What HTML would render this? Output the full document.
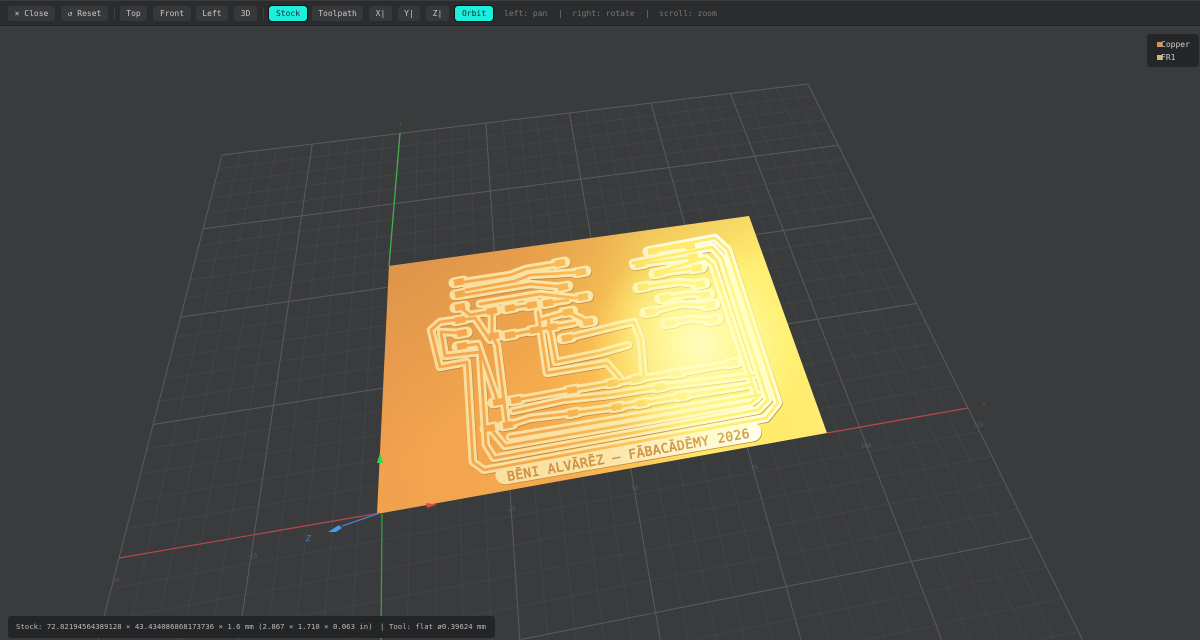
<!DOCTYPE html>
<html><head><meta charset="utf-8"><style>
html,body{margin:0;padding:0;background:#3a3b3d;width:1200px;height:640px;overflow:hidden}
body{position:relative;font-family:"DejaVu Sans Mono","Liberation Mono",monospace;font-size:8px;color:#c4c4c4}
#bar{position:absolute;left:0;top:1px;width:1200px;height:24px;background:#2b2c2e;border-bottom:1px solid #232325}
.b{position:absolute;top:6px;height:15px;line-height:15px;background:#37383a;border-radius:3px;text-align:center;color:#c8c8c8;white-space:pre}
.a{background:#1cf0dc;color:#123;box-shadow:0 0 0 1px #111}
.s{position:absolute;top:7px;width:1px;height:12px;background:#3f4042}
.h{position:absolute;top:6px;line-height:15px;color:#777;white-space:pre}
#leg{position:absolute;left:1147px;top:34px;width:52px;height:33px;background:#252628;border-radius:3px}
#leg div{position:absolute;left:14px;line-height:11px;color:#d0d0d0}
#leg i{position:absolute;left:10px;width:5px;height:5px}
#st{position:absolute;left:8px;top:616px;width:487px;height:22px;line-height:22px;background:#242527;border-radius:3px;color:#bbb;font-size:7.32px}
#st span{position:absolute;top:0;white-space:pre}
svg{position:absolute;left:0;top:0}
</style></head><body>
<svg width="1200" height="640" viewBox="0 0 1200 640" xmlns="http://www.w3.org/2000/svg">
<defs>
<linearGradient id="pl" gradientUnits="userSpaceOnUse" x1="380" y1="400" x2="800" y2="310">
<stop offset="0" stop-color="#f2a24e"/><stop offset=".38" stop-color="#f6ab4e"/><stop offset=".56" stop-color="#fbc656"/><stop offset=".7" stop-color="#ffe766"/><stop offset="1" stop-color="#ffec70"/>
</linearGradient>
<linearGradient id="pale" gradientUnits="userSpaceOnUse" x1="430" y1="380" x2="720" y2="320">
<stop offset="0" stop-color="#f8dc9c"/><stop offset=".55" stop-color="#fbe6a8"/><stop offset="1" stop-color="#fffff0"/>
</linearGradient>
<radialGradient id="gl" gradientUnits="userSpaceOnUse" cx="700" cy="345" r="110">
<stop offset="0" stop-color="#ffffc8" stop-opacity=".9"/><stop offset=".6" stop-color="#ffffa0" stop-opacity=".5"/><stop offset="1" stop-color="#ffff80" stop-opacity="0"/>
</radialGradient>
<linearGradient id="tl" gradientUnits="userSpaceOnUse" x1="395" y1="270" x2="480" y2="420">
<stop offset="0" stop-color="#d89048" stop-opacity=".75"/><stop offset="1" stop-color="#d89048" stop-opacity="0"/>
</linearGradient>
<clipPath id="pc"><polygon points="389,266 749,216 827,433 377,514"/></clipPath>
<g id="T" fill="none" stroke-linejoin="round" stroke-linecap="round">
<path d="M458,283 L510,275 L526,269 L563,263"/>
<path d="M466,290 L515,281 L530,275 L583,272"/>
<path d="M458,296 L530,284 L563,287"/>
<path d="M480,304 L540,294 L575,298 L585,297"/>
<path d="M460,307 L470,315 L492,311"/>
<path d="M510,308 L532,305"/>
<path d="M548,303 L568,300"/>
<path d="M540,320 L568,312 L588,322"/>
<path d="M510,335 L535,330 L552,327 L575,323"/>
<path d="M567,338 L620,325 L634,322 L641,340 L644,378"/>
<path d="M538,312 L547,373 L607,363 L620,378"/>
<path d="M548,318 L556,362 L600,353 L628,345"/>
<path d="M492,311 L492,335 L497,345 L507,425"/>
<path d="M460,320 L475,318 L490,340"/>
<path d="M462,346 L478,344 L498,402"/>
<path d="M650,250 L715,238 L728,250 L778,403 L766,418 L484,470 L473,462 L467,362 L440,367 L431,330 L440,322 L462,319"/>
<path d="M633,263 L712,247 L722,258 L768,400 L758,410 L494,458 L486,445 L480,352 L445,356 L441,332 L462,333"/>
<path d="M655,273 L705,258 L713,265 L757,398 L750,403 L505,446 L490,428"/>
<path d="M516,400 L560,392 L572,390 L613,383 L637,379 L677,373 L733,363"/>
<path d="M508,425 L530,418 L573,413 L617,407 L642,403 L682,396 L750,385"/>
<path d="M513,411 L563,400 L610,395 L660,387 L755,375"/>
<path d="M510,437 L760,395"/>
<path d="M643,287 L680,282 L700,284"/>
<path d="M665,298 L690,294 L705,295"/>
<path d="M650,312 L680,304 L710,305"/>
<path d="M670,323 L690,319 L713,320"/>
<path d="M640,264 L693,257"/>
<path d="M653,251 L690,246"/>
<path d="M659,273 L697,268"/>
</g>
</defs>
<g id="grid" fill="none"></g>
<g fill="#5a5b5d" font-size="6" text-anchor="middle">
<text x="114" y="582">-50</text><text x="252" y="558">-25</text><text x="512" y="511">25</text><text x="635" y="490">50</text><text x="755" y="470">75</text><text x="866" y="448">100</text><text x="978" y="427">125</text>
</g>
<path d="M119,558 L380,513" stroke="#b8474c" stroke-width="1.200"/>
<path d="M827,433 L968,408" stroke="#b8474c" stroke-width="1.200"/>
<path d="M400,133 L389,266" stroke="#3fb24a" stroke-width="1.300"/>
<path d="M382,514 L381,640" stroke="#3a9e44" stroke-width="1.300"/>
<circle cx="984" cy="404.500" r=".8" fill="#c04048"/>
<circle cx="400.500" cy="123.500" r=".7" fill="#2f7f3a"/>
<polygon points="389,266 749,216 827,433 377,514" fill="url(#pl)"/>
<polygon points="389,266 749,216 827,433 377,514" fill="url(#tl)"/>
<g clip-path="url(#pc)">
<g transform="translate(.6,.7)"><use href="#T" stroke="#bd843a" stroke-width="8.500"/><path id="p1" fill="none" stroke="#bd843a" stroke-width="11" stroke-linecap="round"/>
<path d="M505,475 L752,432" stroke="#bd843a" stroke-width="19" stroke-linecap="round"/></g>
<use href="#T" stroke="url(#pale)" stroke-width="8.500"/><path id="p2" fill="none" stroke="url(#pale)" stroke-width="11" stroke-linecap="round"/>
<path d="M505,475 L752,432" stroke="url(#pale)" stroke-width="19" stroke-linecap="round"/>
<use href="#T" stroke="url(#pl)" stroke-width="2.800"/><path id="p3" fill="none" stroke="url(#pl)" stroke-width="6.500"/>
<text transform="translate(508,481) rotate(-10.200)" font-family="'DejaVu Sans Mono','Liberation Mono',monospace" font-size="13" fill="#e09a45" stroke="#b57a30" stroke-width=".35" textLength="246" lengthAdjust="spacing">BĒNI ALVĀRĒZ – FĀBACĀDĒMY 2026</text>
<polygon points="389,266 749,216 827,433 377,514" fill="url(#gl)"/>
</g>
<path d="M380,513 L342,526" stroke="#4a80c8" stroke-width="1.400"/>
<polygon points="328,532 339,525 342,528 336,532" fill="#4c98f0"/>
<polygon points="380,453 377,463 383,463" fill="#2fd84a"/>
<polygon points="426,503 437,504.500 427,508" fill="#e0474c"/>
<text x="306" y="541" font-size="8" font-style="italic" fill="#4a80c8">Z</text>
</svg>
<div id="bar"></div>
<div class="b" style="left:8px;width:47px">× Close</div>
<div class="b" style="left:61px;width:47px">↺ Reset</div>
<div class="s" style="left:114px"></div>
<div class="b" style="left:120px;width:27px">Top</div>
<div class="b" style="left:153px;width:38px">Front</div>
<div class="b" style="left:196px;width:32px">Left</div>
<div class="b" style="left:234px;width:23px">3D</div>
<div class="s" style="left:263px"></div>
<div class="b a" style="left:269px;width:38px">Stock</div>
<div class="b" style="left:312px;width:51px">Toolpath</div>
<div class="b" style="left:369px;width:23px">X|</div>
<div class="b" style="left:398px;width:22px">Y|</div>
<div class="b" style="left:426px;width:23px">Z|</div>
<div class="b a" style="left:455px;width:38px">Orbit</div>
<div class="h" style="left:504px">left: pan</div>
<div class="h" style="left:558px">|</div>
<div class="h" style="left:572px">right: rotate</div>
<div class="h" style="left:645px">|</div>
<div class="h" style="left:659px">scroll: zoom</div>
<div id="leg"><i style="top:8px;background:#d9934a"></i><div style="top:5px">Copper</div><i style="top:21px;background:#e0b468"></i><div style="top:18px">FR1</div></div>
<div id="st"><span style="left:8px">Stock: 72.82194564389128 × 43.434086868173736 × 1.6 mm (2.867 × 1.710 × 0.063 in)</span><span style="left:372px">|</span><span style="left:381px">Tool: flat ø0.39624 mm</span></div>
<script>
(function(){
var x0=119,y0=558,x1=968,y1=408,x2=808,y2=84,x3=222,y3=155;
var dx1=x1-x2,dx2=x3-x2,sx=x0-x1+x2-x3,dy1=y1-y2,dy2=y3-y2,sy=y0-y1+y2-y3;
var den=dx1*dy2-dx2*dy1,g=(sx*dy2-dx2*sy)/den,h=(dx1*sy-sx*dy1)/den;
var a=x1-x0+g*x1,b=x3-x0+h*x3,c=x0,d=y1-y0+g*y1,e=y3-y0+h*y3,f=y0;
function P(u,v){var s=(u+2)/7,t=v/4,w=g*s+h*t+1;return [(a*s+b*t+c)/w,(d*s+e*t+f)/w];}
function L(p,q){
  var Y=639.5;
  if(p[1]>Y&&q[1]>Y)return "";
  function cl(o,r){if(o[1]<=Y)return o;var k=(Y-r[1])/(o[1]-r[1]);return [r[0]+(o[0]-r[0])*k,Y];}
  var A=cl(p,q),B=cl(q,p);
  return "M"+A[0].toFixed(1)+","+A[1].toFixed(1)+" L"+B[0].toFixed(1)+","+B[1].toFixed(1);
}
var minor="",major="",i,u,v,vb=-2.2;
for(i=0;i<=35;i++){u=-2+i/5;var sd=L(P(u,vb),P(u,4));if(i%5==0){if(i!=10)major+=sd;}else minor+=sd;}
for(i=-11;i<=20;i++){v=i/5;var sh=L(P(-2,v),P(5,v));if(i%5==0){if(i!=0)major+=sh;}else minor+=sh;}
var gr=document.getElementById("grid");
gr.innerHTML='<path d="'+minor+'" stroke="#444547" stroke-width=".8"/><path d="'+major+'" stroke="#5a5b5d" stroke-width="1"/>';
var pads=[459,282,460,294,460,307,560,263,581,272,563,287,583,297,510,308,532,305,548,303,568,312,588,322,510,335,535,330,552,327,567,338,460,320,462,333,462,346,492,311,494,336,653,251,690,246,640,264,693,257,659,273,697,268,643,287,700,284,665,298,705,295,650,312,710,305,670,323,713,320,516,400,572,390,613,383,573,413,617,407,508,425,490,428,498,402,733,363,677,373,637,379,682,396,660,387,642,403];
var ds="";
for(i=0;i<pads.length;i+=2){ds+="M"+(pads[i]-5)+","+(pads[i+1]+.9)+" L"+(pads[i]+5)+","+(pads[i+1]-.9);}
["p1","p2","p3"].forEach(function(id){document.getElementById(id).setAttribute("d",ds);});
})();
</script>
</body></html>
